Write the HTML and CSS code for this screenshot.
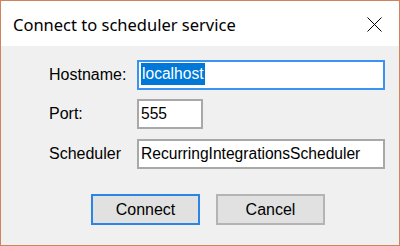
FILE: index.html
```html
<!DOCTYPE html>
<html>
<head>
<meta charset="utf-8">
<link rel="stylesheet" href="styles.css">
</head>
<body>
<div class="dialog">
  <div class="titlebar">
    <span class="title">Connect to scheduler service</span>
    <svg class="close" width="15" height="15" viewBox="0 0 15 15"><path d="M0.5 0.5 L14.5 14.5 M14.5 0.5 L0.5 14.5" stroke="#000" stroke-width="1" fill="none"/></svg>
  </div>
  <div class="content">
    <div class="form">
      <div class="label">Hostname:</div>
      <div class="field field-wide focused"><span class="sel">localhost</span></div>
      <div class="label">Port:</div>
      <div class="field field-port">555</div>
      <div class="label">Scheduler</div>
      <div class="field field-wide">RecurringIntegrationsScheduler</div>
    </div>
    <div class="buttons">
      <div class="btn default">Connect</div>
      <div class="btn">Cancel</div>
    </div>
  </div>
</div>
</body>
</html>
```
FILE: styles.css
```css
html, body {
  margin: 0;
  padding: 0;
}
body {
  width: 400px;
  height: 246px;
  overflow: hidden;
  font-family: "Liberation Sans", Arial, sans-serif;
  color: #000;
}
.dialog {
  box-sizing: border-box;
  width: 400px;
  height: 246px;
  border: 1px solid #cc8458;
  background: #f0f0f0;
  display: flex;
  flex-direction: column;
}
.titlebar {
  height: 45px;
  background: #fff;
  display: flex;
  align-items: center;
  justify-content: space-between;
  padding: 0 17px 0 12px;
}
.title {
  font-family: "Noto Sans", "Open Sans", sans-serif;
  font-size: 16.5px;
  margin-top: 2px;
}
.close {
  display: block;
  margin-top: 1px;
}
.content {
  padding: 14px 0 0 48px;
}
.form {
  display: grid;
  grid-template-columns: 88px 248px;
  grid-template-rows: 39px 40px 30px;
  align-items: start;
}
.label {
  font-size: 16px;
  height: 30px;
  line-height: 30px;
}
.field {
  box-sizing: border-box;
  height: 30px;
  border: 2px solid #a8a8a8;
  background: #fff;
  font-size: 15.6px;
  line-height: 26px;
  padding-left: 2px;
  white-space: nowrap;
  overflow: hidden;
}
.field-wide { width: 248px; }
.field-port { width: 66px; }
.focused {
  border-color: #3a93f3;
}
.sel {
  display: inline-block;
  background: #0078d7;
  color: #fff;
  line-height: 22px;
  padding: 0 1px;
  vertical-align: top;
  margin-top: 1px;
}
.buttons {
  display: flex;
  gap: 16px;
  margin: 25px 0 0 42px;
}
.btn {
  box-sizing: border-box;
  width: 109px;
  height: 31px;
  background: #e1e1e1;
  border: 2px solid #b4b4b4;
  font-size: 16px;
  line-height: 27px;
  text-align: center;
}
.btn.default {
  border-color: #2a86e2;
}
```
